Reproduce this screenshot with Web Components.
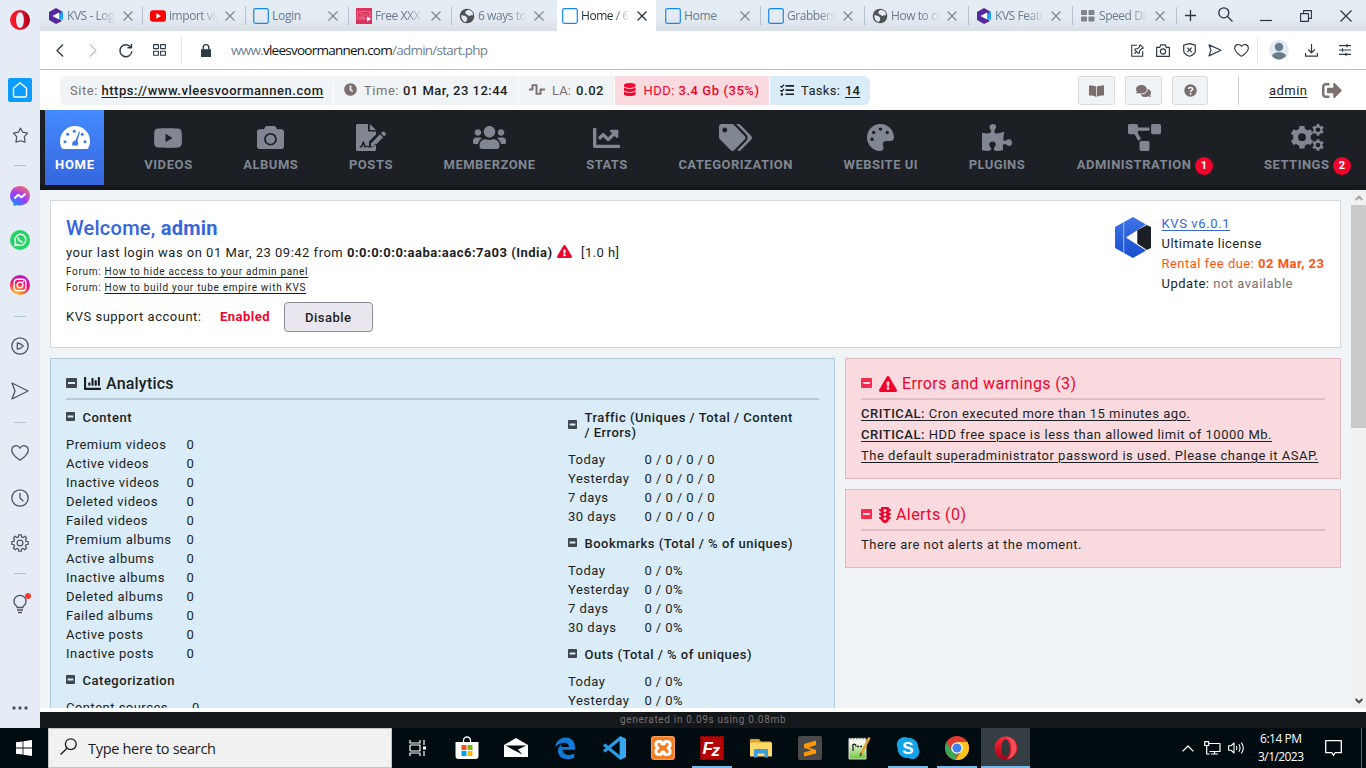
<!DOCTYPE html>
<html lang="en">
<head>
<meta charset="utf-8">
<title>Home / KVS</title>
<style>
html,body{margin:0;height:100%;overflow:hidden}
body{font-family:Roboto,"Liberation Sans",sans-serif;font-size:13px;color:#1c1f24}
</style>
</head>
<body>
<os-desktop></os-desktop>
<script>
const GEAR = (cx, cy, r, n, depth, hole) => {
  let d = '';
  for (let i = 0; i < n; i++) {
    const a = i * 2 * Math.PI / n, s = Math.PI / n;
    [[-.62, r - depth], [-.42, r], [.42, r], [.62, r - depth]].forEach(([k, q], j) => {
      const x = cx + q * Math.sin(a + k * s), y = cy - q * Math.cos(a + k * s);
      d += (i || j ? 'L' : 'M') + x.toFixed(2) + ' ' + y.toFixed(2);
    });
  }
  d += 'Z';
  if (hole) d += `M${cx - hole} ${cy}a${hole} ${hole} 0 1 0 ${2 * hole} 0a${hole} ${hole} 0 1 0 ${-2 * hole} 0Z`;
  return d;
};
const AXES = 'M496 384H64V80c0-8.84-7.16-16-16-16H16C7.16 64 0 71.16 0 80v336c0 17.67 14.33 32 32 32h464c8.84 0 16-7.16 16-16v-32c0-8.84-7.16-16-16-16z';
const P = d => `<path fill="currentColor" fill-rule="evenodd" d="${d}"/>`;
const S = (d, w = 1.3, extra = '') => `<path fill="none" stroke="currentColor" stroke-width="${w}" stroke-linejoin="round" ${extra} d="${d}"/>`;
const ICONS = {
  clock: ['0 0 512 512', P('M256,8C119,8,8,119,8,256S119,504,256,504,504,393,504,256,393,8,256,8Zm92.49,313h0l-20,25a16,16,0,0,1-22.49,2.5h0l-67-49.72a40,40,0,0,1-15-31.23V112a16,16,0,0,1,16-16h32a16,16,0,0,1,16,16V256l58,42.5A16,16,0,0,1,348.49,321Z')],
  wave: ['0 0 16 12', S('M0 6h3.5V1.2h4V10.8h4V6H16', 2)],
  database: ['0 0 448 512', P('M448 73.143v45.714C448 159.143 347.667 192 224 192S0 159.143 0 118.857V73.143C0 32.857 100.333 0 224 0s224 32.857 224 73.143zM448 176v102.857C448 319.143 347.667 352 224 352S0 319.143 0 278.857V176c48.125 33.143 136.208 48.572 224 48.572S399.874 209.143 448 176zm0 160v102.857C448 479.143 347.667 512 224 512S0 479.143 0 438.857V336c48.125 33.143 136.208 48.572 224 48.572S399.874 369.143 448 336z')],
  tasks: ['0 0 14 12', S('M.4 2l1.3 1.3L4 .7M.4 6.2l1.3 1.3L4 4.9', 1.2) + P('M5.5 1h8.5v1.7H5.5zM5.5 5.2h8.5v1.7H5.5zM5.5 9.4h8.5v1.7H5.5zM.8 9.2h2.2v2.2H.8z')],
  book: ['0 0 16 12', P('M0 1C0 .6.3.3.7.3 3 .4 6 .8 7.6 1.7V12C6 11 3 10.700.7 10.600.300 10.600 0 10.300 0 9.900ZM16 1c0-.4-.3-.7-.7-.7C13 .4 10 .8 8.400 1.700V12c1.600-1 4.600-1.300 6.900-1.400.4 0 .7-.3.7-.7Z')],
  comments: ['0 32 576 448', P('M416 192c0-88.400-93.100-160-208-160S0 103.600 0 192c0 34.300 14.100 65.900 38 92-13.400 30.200-35.500 54.200-35.800 54.500-2.200 2.300-2.800 5.700-1.500 8.700S4.800 352 8 352c36.600 0 66.900-12.300 88.700-25 32.200 15.700 70.300 25 111.300 25 114.900 0 208-71.600 208-160zm122 220c23.900-26 38-57.700 38-92 0-66.900-53.500-124.200-129.300-148.100.900 6.600 1.300 13.300 1.300 20.100 0 105.900-107.700 192-240 192-10.800 0-21.300-.800-31.700-1.900C207.800 439.600 281.800 480 368 480c41 0 79.100-9.200 111.300-25 21.800 12.700 52.100 25 88.700 25 3.200 0 6.100-1.900 7.300-4.800 1.300-2.900.700-6.300-1.500-8.700-.300-.300-22.400-24.200-35.800-54.500z')],
  question: ['0 0 14 14', '<circle cx="7" cy="7" r="6.700" fill="currentColor"/><path fill="none" stroke="#f0f4f7" stroke-width="1.700" d="M4.800 5.400C5 3.300 9.300 3.100 9.300 5.400 9.300 6.900 7.100 6.800 7.100 8.600"/><circle cx="7.100" cy="10.500" r="1.100" fill="#f0f4f7"/>'],
  signout: ['0 64 512 384', P('M497 273L329 441c-15 15-41 4.500-41-17v-96H152c-13.300 0-24-10.700-24-24v-96c0-13.300 10.700-24 24-24h136V88c0-21.400 25.900-32 41-17l168 168c9.300 9.400 9.300 24.600 0 34zM192 436v-40c0-6.600-5.400-12-12-12H96c-17.700 0-32-14.300-32-32V160c0-17.700 14.300-32 32-32h84c6.600 0 12-5.400 12-12V76c0-6.600-5.400-12-12-12H96c-53 0-96 43-96 96v192c0 53 43 96 96 96h84c6.600 0 12-5.400 12-12z')],
  gauge: ['0 0 30 23', '<path fill="currentColor" d="M15 0A15 15 0 0 0 0 15c0 2.800.700 5.400 2 7.500.3.300.8.500 1.300.5h23.400c.5 0 1-.2 1.300-.5 1.300-2.100 2-4.700 2-7.500A15 15 0 0 0 15 0Z"/><g fill="#3d78ef"><circle cx="7.700" cy="8.200" r="1.500"/><circle cx="14.300" cy="5.200" r="1.500"/><circle cx="22.300" cy="8.200" r="1.500"/><circle cx="5" cy="15.700" r="1.500"/><circle cx="25" cy="15.700" r="1.500"/><path d="M19 5.500l1 .3-2.600 9.500c1.200 1.200.900 2.800.3 4.200h-5.400c-.7-2.300.5-4.600 3.200-4.900z"/></g>'],
  video: ['0 0 28 20', P('M4 .5C8 0 20 0 24 .5c3 .3 3.600 2 3.800 5 .2 3 .2 6 0 9-.2 3-.8 4.700-3.800 5-4 .5-16 .5-20 0-3-.3-3.600-2-3.800-5-.2-3-.2-6 0-9C.400 2.500 1 .800 4 .500ZM11.500 5.800v8.400L18.500 10Z')],
  camera: ['0 32 512 448', P('M512 144v288c0 26.500-21.500 48-48 48H48c-26.500 0-48-21.500-48-48V144c0-26.500 21.500-48 48-48h88l12.300-32.900c7-18.700 24.900-31.100 44.900-31.100h125.500c20 0 37.900 12.400 44.900 31.100L376 96h88c26.500 0 48 21.500 48 48zM376 288c0-66.200-53.800-120-120-120s-120 53.800-120 120 53.800 120 120 120 120-53.800 120-120zm-32 0c0 48.500-39.500 88-88 88s-88-39.500-88-88 39.500-88 88-88 88 39.500 88 88z')],
  post: ['0 0 30 27', P('M1.600 0H12v6.200c0 .9.500 1.300 1.300 1.300H20v3L13 17.600V22l-1 .2c-.8 0-1-.8-1.500-.9-.6 0-.8.5-1.300.5l-1-3.800c-.3-1-1.400-.9-1.700 0L5 22H3.700v1.500H6l1.200-3 1.200 3h1.200l1-.7 1.500.8H16l4-4V25.400c0 .9-.6 1.600-1.600 1.600H1.600C.600 27 0 26.300 0 25.400V1.600C0 .600.600 0 1.600 0ZM13.800 0 20 6H13.800ZM15 19.400 24 10.300 27.100 13.400 18 22.500H15ZM25 9.300 26.400 7.900c.6-.6 1.300-.6 1.900 0l1.200 1.200c.6.600.6 1.300 0 1.900L28.100 12.400Z')],
  users: ['0 32 640 448', P('M96 224c35.300 0 64-28.700 64-64s-28.700-64-64-64-64 28.700-64 64 28.700 64 64 64zm448 0c35.300 0 64-28.700 64-64s-28.700-64-64-64-64 28.700-64 64 28.700 64 64 64zm32 32h-64c-17.600 0-33.500 7.100-45.100 18.600 40.300 22.100 68.900 62 75.100 109.400h66c17.700 0 32-14.300 32-32v-32c0-35.300-28.700-64-64-64zm-256 0c61.900 0 112-50.100 112-112S381.900 32 320 32 208 82.100 208 144s50.100 112 112 112zm76.800 32h-8.300c-20.800 10-43.900 16-68.500 16s-47.600-6-68.500-16h-8.300C179.600 288 128 339.600 128 403.200V432c0 26.500 21.500 48 48 48h288c26.500 0 48-21.500 48-48v-28.800c0-63.600-51.600-115.200-115.200-115.200zm-223.700-13.400C161.500 263.100 145.600 256 128 256H64c-35.300 0-64 28.700-64 64v32c0 17.700 14.300 32 32 32h65.900c6.300-47.400 34.900-87.300 75.200-109.400z')],
  chart: ['0 64 512 384', P(AXES + 'M464 96H345.940c-21.380 0-32.090 25.850-16.970 40.970l32.400 32.400L288 242.750l-73.370-73.370c-12.500-12.500-32.760-12.500-45.250 0l-68.690 68.690c-6.250 6.250-6.250 16.380 0 22.630l22.620 22.620c6.250 6.250 16.380 6.250 22.630 0L192 237.250l73.370 73.370c12.500 12.500 32.760 12.500 45.250 0l96-96 32.400 32.400c15.120 15.120 40.970 4.410 40.970-16.970V112c.01-8.840-7.150-16-15.990-16z')],
  bars: ['0 64 512 384', P(AXES + 'M333 320h38c7 0 13-6 13-13V173c0-7-6-13-13-13h-38c-7 0-13 6-13 13v134c0 7 6 13 13 13zM429 320h38c7 0 13-6 13-13V77c0-7-6-13-13-13h-38c-7 0-13 6-13 13v230c0 7 6 13 13 13zM141 320h38c7 0 13-6 13-13v-70c0-7-6-13-13-13h-38c-7 0-13 6-13 13v70c0 7 6 13 13 13zM237 320h38c7 0 13-6 13-13V109c0-7-6-13-13-13h-38c-7 0-13 6-13 13v198c0 7 6 13 13 13z')],
  tags: ['0 0 640 512', P('M497.941 225.941L286.059 14.059A48 48 0 0 0 252.118 0H48C21.490 0 0 21.490 0 48v204.118a48 48 0 0 0 14.059 33.941l211.882 211.882c18.744 18.745 49.136 18.746 67.882 0l204.118-204.118c18.745-18.745 18.745-49.137 0-67.882zM112 160c-26.510 0-48-21.490-48-48s21.490-48 48-48 48 21.490 48 48-21.490 48-48 48zm513.941 133.823L421.823 497.941c-18.745 18.745-49.137 18.745-67.882 0l-.360-.360L527.640 323.522c16.999-16.999 26.360-39.600 26.360-63.640s-9.362-46.641-26.360-63.640L331.397 0h48.721a48 48 0 0 1 33.941 14.059l211.882 211.882c18.745 18.745 18.745 49.137 0 67.882z')],
  palette: ['0 0 512 512', P('M204.300 5C104.900 24.400 24.800 104.300 5.200 203.400c-37 187 131.700 326.400 258.800 306.700 41.200-6.400 61.400-54.600 42.500-91.700-23.100-45.400 9.900-98.400 60.900-98.400h79.700c35.800 0 64.800-29.600 64.900-65.300C511.500 97.100 368.100-26.900 204.300 5zM96 320c-17.700 0-32-14.300-32-32s14.300-32 32-32 32 14.300 32 32-14.300 32-32 32zm32-128c-17.700 0-32-14.300-32-32s14.300-32 32-32 32 14.300 32 32-14.300 32-32 32zm128-64c-17.700 0-32-14.300-32-32s14.300-32 32-32 32 14.300 32 32-14.300 32-32 32zm128 64c-17.700 0-32-14.300-32-32s14.300-32 32-32 32 14.300 32 32-14.300 32-32 32z')],
  puzzle: ['0 0 576 512', P('M519.442 288.651c-41.519 0-59.500 31.593-82.058 31.593C377.409 320.244 432 144 432 144s-196.288 80-196.288-3.297c0-35.827 36.288-46.250 36.288-85.985C272 19.216 243.885 0 210.539 0c-34.654 0-66.366 18.891-66.366 56.346 0 41.364 31.711 59.277 31.711 81.750C175.885 207.719 0 166.758 0 166.758v333.237s178.635 41.047 178.635-28.662c0-22.473-40-40.107-40-81.471 0-37.456 29.250-56.346 63.577-56.346 33.673 0 61.788 19.216 61.788 54.717 0 39.735-36.288 50.158-36.288 85.985 0 60.803 129.675 25.730 181.230 25.730 0 0-34.725-120.101 25.827-120.101 35.962 0 46.423 36.152 86.308 36.152C556.712 416 576 387.990 576 354.443c0-34.199-18.962-65.792-56.558-65.792z')],
  diagram: ['0 0 640 512', P('M384 320H256c-17.670 0-32 14.330-32 32v128c0 17.670 14.330 32 32 32h128c17.670 0 32-14.330 32-32V352c0-17.670-14.330-32-32-32zM192 32c0-17.670-14.330-32-32-32H32C14.330 0 0 14.330 0 32v128c0 17.670 14.330 32 32 32h95.720l73.160 128.040C211.980 300.980 232.400 288 256 288h.280L192 175.510V128h224V64H192V32zM608 0H480c-17.670 0-32 14.330-32 32v128c0 17.670 14.330 32 32 32h128c17.670 0 32-14.330 32-32V32c0-17.670-14.330-32-32-32z')],
  cogs: ['0 0 33 27', P(GEAR(11, 13.200, 11.600, 6, 2.700, 3.900) + GEAR(27, 5.800, 6, 6, 1.500, 2.300) + GEAR(27, 21, 6, 6, 1.500, 2.300))],
  warning: ['0 0 576 512', P('M569.517 440.013C587.975 472.007 564.806 512 527.940 512H48.054c-36.937 0-59.999-40.055-41.577-71.987L246.423 23.985c18.467-32.009 64.720-31.951 83.154 0l239.940 416.028zM288 354c-25.405 0-46 20.595-46 46s20.595 46 46 46 46-20.595 46-46-20.595-46-46-46zm-43.673-165.346l7.418 136c.347 6.364 5.609 11.346 11.982 11.346h48.546c6.373 0 11.635-4.982 11.982-11.346l7.418-136c.375-6.874-5.098-12.654-11.982-12.654h-63.383c-6.884 0-12.356 5.780-11.981 12.654z')],
  traffic: ['0 0 384 512', P('M384 192h-64v-37.880c37.200-13.220 64-48.380 64-90.120h-64V32c0-17.670-14.330-32-32-32H96C78.330 0 64 14.330 64 32v32H0c0 41.740 26.800 76.900 64 90.120V192H0c0 41.740 26.800 76.900 64 90.120V320H0c0 42.840 28.250 78.690 66.990 91.050C79.420 468.720 130.600 512 192 512s112.580-43.280 125.010-100.950C355.750 398.690 384 362.840 384 320h-64v-37.880c37.200-13.220 64-48.380 64-90.120zM192 416c-26.510 0-48-21.490-48-48s21.490-48 48-48 48 21.490 48 48-21.490 48-48 48zm0-128c-26.510 0-48-21.490-48-48s21.490-48 48-48 48 21.490 48 48-21.490 48-48 48zm0-128c-26.510 0-48-21.490-48-48s21.490-48 48-48 48 21.490 48 48-21.490 48-48 48z')],
  minus: ['0 0 11 10', P('M1 0h9q1 0 1 1v8q0 1-1 1H1q-1 0-1-1V1q0-1 1-1ZM2 4v2h7V4Z')],

  opera: ['0 0 20 20', '<defs><linearGradient id="a" x1="0" y1="0" x2="1" y2="0"><stop offset="0" stop-color="#ff1b2d"/><stop offset=".55" stop-color="#e0112b"/><stop offset="1" stop-color="#a70014"/></linearGradient></defs><path fill="url(#a)" fill-rule="evenodd" d="M10 0a10 10 0 1 0 0 20a10 10 0 0 0 0-20ZM10 2.200c2.500 0 3.900 3.500 3.900 7.800s-1.400 7.800-3.900 7.800S6.100 14.300 6.100 10 7.500 2.200 10 2.200Z"/>'],
  operaTask: ['0 0 24 24', '<defs><linearGradient id="b" x1="0" y1="0" x2="0" y2="1"><stop offset="0" stop-color="#ff2b3d"/><stop offset="1" stop-color="#a70014"/></linearGradient></defs><circle cx="12" cy="12" r="11.500" fill="url(#b)"/><path fill="#f0505a" d="M12 .500c14 2 14 21 0 23 7-3 7-20 0-23Z"/><ellipse cx="11.500" cy="12" rx="4.200" ry="8.800" fill="#30383b"/>'],
  home: ['0 0 24 24', '<rect width="24" height="24" rx="2" fill="#0a9dff"/><path fill="none" stroke="#fff" stroke-width="1.400" stroke-linejoin="round" d="M12 4.800 5.500 10.200V17.500q0 1.500 1.500 1.500h10q1.500 0 1.500-1.500V10.200Z"/>'],
  star: ['0 0 18 18', S('M9 1.200l2.300 4.300 5.200.9-3.500 3.800.8 5.900L9 14.600l-4.800 1.500.8-5.900L1.500 6.400l5.200-.9Z')],
  messenger: ['0 0 20 20', '<defs><radialGradient id="m" cx=".2" cy="1" r="1.150"><stop offset="0" stop-color="#0a95ff"/><stop offset=".55" stop-color="#9b3dfb"/><stop offset="1" stop-color="#ff6d66"/></radialGradient></defs><path fill="url(#m)" d="M10 0a10 9.700 0 1 1-3.200 18.900L3.500 20V17A10 9.700 0 0 1 10 0Z"/><path fill="none" stroke="#fff" stroke-width="2" stroke-linejoin="round" d="M4.500 12.500 8.200 8.700l3.300 2.600 4-3.600"/>'],
  whatsapp: ['0 0 20 20', '<circle cx="10" cy="10" r="10" fill="#25d366"/><path fill="none" stroke="#fff" stroke-width="1.400" d="M4.800 15.400l.8-2.900a5.500 5.500 0 1 1 2.100 2.100Z"/><path fill="none" stroke="#fff" stroke-width="1.700" d="M8 7.300c0 2.300 2 4.600 4.700 4.800"/>'],
  instagram: ['0 0 20 20', '<defs><radialGradient id="i" cx=".3" cy="1" r="1.150"><stop offset="0" stop-color="#ffc738"/><stop offset=".3" stop-color="#ff7a2b"/><stop offset=".6" stop-color="#f70d72"/><stop offset="1" stop-color="#9a1df0"/></radialGradient></defs><circle cx="10" cy="10" r="10" fill="url(#i)"/><rect x="4.200" y="4.200" width="11.600" height="11.600" rx="3.200" fill="none" stroke="#fff" stroke-width="1.400"/><circle cx="10" cy="10" r="2.900" fill="none" stroke="#fff" stroke-width="1.400"/><circle cx="13.300" cy="6.700" r=".9" fill="#fff"/>'],
  play: ['0 0 18 18', '<circle cx="9" cy="9" r="8.200" fill="none" stroke="currentColor" stroke-width="1.300"/>' + S('M6.300 6v6q2.500.2 6-3-3.500-3.200-6-3Z')],
  send: ['0 0 18 18', S('M1 1 17 9 1 17 4 9Z')],
  heart: ['0 0 18 16', S('M9 15.200C3.500 11.500.8 8.500.8 5.200c0-5.300 6.200-5.800 8.200-2 2-3.800 8.200-3.300 8.200 2 0 3.300-2.700 6.300-8.200 10Z')],
  history: ['0 0 18 18', '<circle cx="9" cy="9" r="8.200" fill="none" stroke="currentColor" stroke-width="1.300"/>' + S('M9 4v5l3.300 3.300')],
  gear: ['0 0 18 18', S(GEAR(9, 9, 8.300, 8, 2, 0), 1.200) + '<circle cx="9" cy="9" r="2.900" fill="none" stroke="currentColor" stroke-width="1.200"/>'],
  bulb: ['0 0 20 22', S('M5 13.500A6 6 0 1 1 11 13.500V14.500H5ZM5 17h6M6 19.500h4', 1.300) + '<circle cx="16" cy="3" r="3" fill="#ff3b30"/>'],
  dots: ['0 0 16 4', '<g fill="currentColor"><circle cx="2" cy="2" r="1.700"/><circle cx="8" cy="2" r="1.700"/><circle cx="14" cy="2" r="1.700"/></g>'],

  kvs: ['0 0 16 16', '<path fill="#5429a0" d="M8 0 15 4 1 12V4ZM1 12V4L8 8l6 5-6 3Z"/><path fill="#16a3fb" d="M11 5.500 15 4v8l-4-1.500Z"/><path fill="#fff" d="M11 4.500v7L4.500 8Z"/>'],
  youtube: ['0 0 16 16', '<rect x="0" y="2.200" width="16" height="11.600" rx="3" fill="#f00"/><path fill="#fff" d="M6.300 5.300v5.400L11 8Z"/>'],
  blank: ['0 0 16 16', '<rect x=".7" y=".7" width="14.600" height="14.600" rx="1.500" fill="none" stroke="#1787f0" stroke-width="1.200"/>'],
  red: ['0 0 16 16', '<rect width="16" height="16" fill="#dd325e"/><path fill="none" stroke="#f3a0b8" stroke-width=".6" d="M1.500 3.500h12.500v7.500H1.500ZM3 5.500h3v3M8 8.500c0-3 3-3 4 0M3 9.300h6"/><path fill="#fff" d="M11 8.500v5l4-2.500Z"/>'],
  globe: ['0 0 16 16', '<circle cx="8" cy="8" r="7.300" fill="#505356"/><path fill="#e4ebf3" d="M10 2c-2 0-4.500 1.500-3.500 3.500.5 1 2.300 1 3 2 1 1.500 2-1 4.500 0 .3-2.500-1-5-4-5.500ZM2.200 7.500c1.500-.5 4 .5 5.300 1.500 1.300 1 .5 4.500-1 5-2.500-.5-4.300-3.500-4.300-6.500Z"/>'],
  dial: ['0 0 16 16', '<g fill="#808386"><rect x="1" y="2" width="6" height="5" rx=".8"/><rect x="8.500" y="2" width="6" height="5" rx=".8"/><rect x="1" y="8.500" width="6" height="5" rx=".8"/><rect x="8.500" y="8.500" width="6" height="5" rx=".8"/></g>'],
  close: ['0 0 10 10', S('M.5.5l9 9M9.500.5l-9 9', 1.200)],
  plus: ['0 0 11 11', S('M5.500 0v11M0 5.500h11', 1.300)],
  search: ['0 0 15 15', S('M9.500 9.500l5 5', 1.300) + '<circle cx="5.800" cy="5.800" r="5" fill="none" stroke="currentColor" stroke-width="1.300"/>'],
  min: ['0 0 12 12', S('M0 11.500h12', 1.200)],
  restore: ['0 0 12 12', S('M.6 3.600h7.800v7.800H.6ZM3.600 3.600v-3h7.800v7.800H8.400', 1.100)],
  winclose: ['0 0 12 12', S('M.5.5l11 11M11.500.5l-11 11', 1.200)],
  back: ['0 0 8 13', S('M7 .5 1 6.500l6 6', 1.400)],
  forward: ['0 0 8 13', S('M1 .5l6 6-6 6', 1.200)],
  reload: ['0 0 14 14', S('M12 4.500A6 6 0 1 0 12.900 8.200M12.500.8v4H8.500', 1.400)],
  grid: ['0 0 13 12', S('M.6.6h4.800v4H.6ZM7.600.6h4.800v4H7.600ZM.6 7.200h4.800v4H.6ZM7.600 7.200h4.800v4H7.600Z', 1.100)],
  lock: ['0 0 10 13', P('M0 5.200h10V13H0Z') + S('M2.200 5.500V3.400a2.800 2.800 0 0 1 5.600 0v2.100', 1.400)],
  pin: ['0 0 13 13', S('M6 1.300H.7v11h11V7M9.300.8l3 3-.9.9-.8-.1-2.100 2.300.1 1.800-.9.900-4-4 .9-.9 1.900.1 2.200-2.100-.2-1ZM5.600 7.500 3.400 9.800', 1.100)],
  shot: ['0 0 14 13', S('M.6 3.300h3.200l1-2.500h4.400l1 2.500h3.200v9H.6Z', 1.200) + '<circle cx="7" cy="7.500" r="2.600" fill="none" stroke="currentColor" stroke-width="1.200"/>'],
  shield: ['0 0 13 14', S('M6.500.7 12.300 2.200V7.500q0 4-5.800 5.800Q.7 11.500.7 7.500V2.200ZM4.300 4.700l4.400 4.400M8.700 4.700 4.300 9.100', 1.200)],
  send2: ['0 0 14 13', S('M1 .9 13 6.300 1 11.900 3 6.300Z', 1.200)],
  avatar: ['0 0 20 20', '<circle cx="10" cy="10" r="10" fill="#e1eaf2"/><g fill="#6b7c8d"><circle cx="10" cy="7" r="4.200"/><path d="M3 16c1-5 13-5 14 0-3.500 4.500-10.500 4.500-14 0Z"/></g>'],
  download: ['0 0 13 13', S('M6.500 0v8.500M3.200 5.500l3.300 3.300 3.300-3.300M.6 9v3.200h11.800V9', 1.200)],
  sliders: ['0 0 12 12', S('M0 1.600h12M0 6h12M0 10.400h12M8 0v3.300M3.500 4.300v3.400M7 8.700V12', 1.200)],
  up: ['0 0 8 6', S('M.7 5 4 1.500 7.300 5', 2)],
  down: ['0 0 8 6', S('M.7 1 4 4.500 7.300 1', 2)],
  brand: ['0 0 36 41', '<defs><linearGradient id="k" x1="0" y1="0" x2="0" y2="1"><stop offset="0" stop-color="#3e74e6"/><stop offset="1" stop-color="#1a4fd0"/></linearGradient></defs><path fill="url(#k)" d="M18 0 31 7.500 11 20.500 31 33.500 18 41 0 31V10Z"/><path fill="#1c1f24" d="M22.300 13.300 31.800 8 36 10V31l-4.200 2L22.300 26.500Z"/><path stroke="#a9c4f8" stroke-width=".9" d="M8.700 5v31"/>'],

  windows: ['0 0 16 16', P('M0 2.300 6.600 1.400V7.600H0ZM7.400 1.300 16 0V7.600H7.400ZM0 8.400H6.600V14.600L0 13.700ZM7.400 8.400H16V16L7.400 14.800Z')],
  tsearch: ['0 0 17 17', S('M7 10.200.6 16.500', 1.300) + '<circle cx="10.800" cy="6.200" r="5.400" fill="none" stroke="currentColor" stroke-width="1.300"/>'],
  taskview: ['0 0 24 24', S('M4 4v3h10V4M4 20v-3h10v3M4 9h10v6H4M4 9v6M18 4v5M18 15v5', 1.200) + '<rect x="17" y="10.500" width="3" height="3" fill="currentColor"/>'],
  store: ['0 0 24 24', '<path fill="none" stroke="#fff" stroke-width="1.300" d="M8.500 7V4.500a3.500 3.500 0 0 1 7 0V7"/><path fill="#fff" d="M.5 6h23v14q0 3-3 3h-17q-3 0-3-3Z"/><path fill="#f25022" d="M6.500 9h5v5h-5z"/><path fill="#7fba00" d="M12.500 9h5v5h-5z"/><path fill="#00a4ef" d="M6.500 15h5v5h-5z"/><path fill="#ffb900" d="M12.500 15h5v5h-5z"/>'],
  mail: ['0 0 24 24', '<path fill="#fff" d="M0 9 12 2l12 7v12H0Z"/><path fill="#000d11" d="M1.500 9.500H22.500L14 13.500l4.500 5L9.500 14Z"/>'],
  edge: ['0 0 24 24', '<path fill="#0f7ad8" d="M2.300 11C3 5 7.500 1.500 12.500 1.500c6.500 0 9.500 4.500 9.500 10v2.300H9.500c.2 3.700 3.300 5.200 6.500 5.200 2 0 3.700-.5 5.200-1.400v4.200c-1.700.9-3.900 1.400-6.200 1.400C9 23.200 5 20 5 15c0-3 1.500-5.700 4.500-7.300-.900.900-1.400 2.100-1.500 3.200h8c-.2-2.500-1.500-4.200-4.300-4.200-4 0-7.200 1.600-9.400 4.300Z"/>'],
  vscode: ['0 0 24 24', '<path fill="#1a7fc4" d="M17.500 0 24 3v18l-6.500 3Z"/><path fill="none" stroke="#2a9ae4" stroke-width="3.200" d="M18.500 2 2 15.500M18.500 22 2 8.500"/><path fill="#37a8f0" d="M18 0l6 3v18l-6 3Z"/>'],
  xampp: ['0 0 24 24', '<rect width="24" height="24" rx="3" fill="#f47c20"/><rect x=".7" y=".7" width="22.600" height="22.600" rx="2.500" fill="none" stroke="#f9a866" stroke-width="1"/><path fill="none" stroke="#fff" stroke-width="3" stroke-linejoin="round" d="M8 5.500h1.500q1 0 1 1.200t1 1.200h1q1 0 1-1.200t1-1.200H16q3 0 3 2.500v1.500q0 1-1 1.500t-1 1 1 1 1 1.500V16q0 2.500-3 2.500h-1.500q-1 0-1-1.200t-1-1.200h-1q-1 0-1 1.200t-1 1.200H8Q5 18.500 5 16v-1.500q0-1 1-1.500t1-1-1-1-1-1.500V8Q5 5.500 8 5.500Z"/>'],
  filezilla: ['0 0 24 24', '<rect width="24" height="24" fill="#b50404"/><rect x=".5" y=".5" width="23" height="23" fill="none" stroke="#5d0505" stroke-dasharray="2 1.500"/><text x="2.500" y="17.500" font-family="Liberation Sans,sans-serif" font-weight="bold" font-style="italic" font-size="17" fill="#fff">F<tspan dy="2.500" dx="-1.500">z</tspan></text>'],
  folder: ['0 0 24 24', '<path fill="#dca12a" d="M1 4q0-1 1-1h8l2 2.500H22V8H1Z"/><path fill="#ffd969" d="M1 6.500h22V20.500H1Z"/><path fill="#3e9be0" d="M5 21.500v-7.500q0-1 1-1h12q1 0 1 1v7.500h-3.500v-4h-7v4Z"/>'],
  sublime: ['0 0 24 24', '<rect width="24" height="24" rx="2" fill="#4a4a4a"/><path fill="#ff9800" d="M18 4.500v4.500L10.500 11.500 18 14v3.500L6 20.500V16.500l7.500-2.200L6 11.700V8Z"/>'],
  notepad: ['0 0 24 24', '<defs><linearGradient id="n" x1="0" y1="0" x2="0" y2="1"><stop offset=".2" stop-color="#f6f8f0"/><stop offset="1" stop-color="#6cc832"/></linearGradient></defs><path fill="url(#n)" stroke="#d9ddd4" d="M2 2.500h17V23H2Z"/><path fill="none" stroke="#77817a" stroke-width="1.500" stroke-dasharray="1.500 1.500" d="M3 2.500h16"/><path fill="none" stroke="#222" stroke-width="1.300" d="M6 15V8.500q3-1 3 2M10 10.500h2M13 10.500h2"/><path stroke="#e8a32c" stroke-width="2.600" d="M22.500 1.500 14 18"/><path stroke="#3b3b3b" stroke-width="1.500" d="M14.200 17l-.9 3"/>'],
  skype: ['0 0 24 24', '<path fill="#13a4e8" d="M7 1.200c2-.5 3.500 0 4.500.6C18 1.500 22.500 6 22.500 12.500 24 15 23.500 19 20.500 21.500c-2.500 2-5.500 1.800-8 .5C6 22.500 1.300 18 1.500 11.500-.5 7 2.500 2.200 7 1.200Z"/><text x="12" y="18" text-anchor="middle" font-family="Liberation Sans,sans-serif" font-weight="bold" font-size="17" fill="#fff">S</text>'],
  chrome: ['0 0 24 24', '<circle cx="12" cy="12" r="12" fill="#e33b2e"/><path fill="#3aa757" d="M1.600 6 7 15l5 3-1.500 5.900A12 12 0 0 1 1.600 6Z"/><path fill="#fcc31e" d="M22.400 6A12 12 0 0 1 10.500 23.900L16.500 14.500 12 6Z"/><circle cx="12" cy="12" r="5.800" fill="#fff"/><circle cx="12" cy="12" r="4.600" fill="#3f82ee"/>'],
  chevron: ['0 0 12 7', S('M.6 6.400 6 1l5.400 5.400', 1.300)],
  network: ['0 0 17 14', S('M4.500 2.500H16v8H5.500M10.500 10.500V13M7 13h7M.7.7h4v3.800h-4ZM2.700 4.500V13h3', 1.200)],
  sound: ['0 0 17 14', S('M.6 4.800H3L6 2v10L3 9.200H.6ZM8.300 5q1.300 2 0 4M10.800 3.300q2.500 3.700 0 7.400M13.300 1.600q4 5.400 0 10.800', 1.100)],
  notice: ['0 0 17 17', S('M.7.7h15.600v12H10L8.500 15.500 7 12.700H.7Z', 1.300)]
};

const define = (name, markup, setup) => customElements.define(name, class extends HTMLElement {
  connectedCallback() {
    if (this.shadowRoot) return;
    const root = this.attachShadow({ mode: 'open' });
    root.innerHTML = typeof markup === 'function' ? markup(this) : markup;
    if (setup) setup(this, root);
  }
});
const ic = (name, w, h, style = '') => `<ui-icon name="${name}" w="${w}" h="${h}" style="${style}"></ui-icon>`;

define('os-desktop', `<style>
:host{display:grid;grid-template-rows:728px 40px;width:1366px;height:768px;overflow:hidden}
.win{display:grid;grid-template-columns:40px 1fr;min-height:0}
.main{display:grid;grid-template-rows:31px 39px 1fr;min-height:0;min-width:0}
</style><div class="win"><side-bar></side-bar><div class="main"><tab-strip></tab-strip><address-bar></address-bar><admin-page></admin-page></div></div><task-bar></task-bar>`);

define('side-bar', () => {
  const items = [['opera', 20, 20, 40], ['home', 24, 24, 24, 38], ['star', 17, 17, 44, 11], 0, ['messenger', 20, 20, 45], ['whatsapp', 20, 20, 44], ['instagram', 20, 20, 46], 0,
    ['play', 18, 18, 44], ['send', 18, 18, 46], 0, ['heart', 18, 16, 45], ['history', 18, 18, 45], ['gear', 18, 18, 45], 0, ['bulb', 20, 22, 46]];
  return `<style>
:host{display:flex;flex-direction:column;align-items:center;background:#e5ecf5;color:#4c5666}
div{display:flex;align-items:center;justify-content:center;flex:none}
i{flex:none;width:12px;height:1px;background:#b3c3d2;margin:8px 0 7px}
.more{margin-top:auto;height:20px;margin-bottom:10px}
</style>` + items.map(t => t ? `<div style="height:${t[3]}px;margin-top:${t[4] || 0}px">${ic(t[0], t[1], t[2], t[0] === 'bulb' ? 'margin-left:4px' : '')}</div>` : '<i></i>').join('') + `<div class="more">${ic('dots', 16, 4)}</div>`;
});

define('browser-tab', el => `<style>
:host{display:flex;box-sizing:border-box;height:31px;border-left:1px solid transparent;color:#6b7c8e}
.in{flex:1;display:flex;align-items:center;padding-left:7px;min-width:0}
:host([sep]){border-image:linear-gradient(transparent 7px,#b5c4d1 7px,#b5c4d1 24px,transparent 24px) 1}
:host([active]) .in{background:#fff;margin:0 1px 0 2px;padding-left:5px;color:#1d2a36}
.t{width:49px;margin-left:3px;overflow:hidden;white-space:nowrap;font:12px "Open Sans","Noto Sans",sans-serif;letter-spacing:-.45px;-webkit-mask:linear-gradient(90deg,#000 65%,transparent)}
:host([full]) .t{-webkit-mask:none;letter-spacing:-.3px}
ui-icon.x{margin-left:7px;color:#7b8791}
:host([active]) .x{color:#222c36}
</style><div class="in">${ic(el.getAttribute('icon'), 16, 16)}<span class="t"><slot></slot></span><ui-icon class="x" name="close" w="10" h="10"></ui-icon></div>`);

define('tab-strip', () => {
  const tabs = [['kvs', 'KVS - Log', 102], ['youtube', 'import vid', 103, 1], ['blank', 'Login', 103, 1, 1], ['red', 'Free XXX', 103, 1], ['globe', '6 ways to', 103, 1], ['blank', 'Home / 6', 103], ['blank', 'Home', 103, 0, 1], ['blank', 'Grabbers', 104, 1], ['globe', 'How to cr', 104, 1], ['kvs', 'KVS Featu', 104, 1], ['dial', 'Speed Dia', 104, 1]];
  return `<style>
:host{display:flex;background:linear-gradient(#e5edf5 0,#e3eaf2 60%,#d9dfe7 100%);color:#2b3540}
.b{display:flex;align-items:center;justify-content:center;flex:none}
</style>` + tabs.map((t, i) => `<browser-tab icon="${t[0]}" style="width:${t[2]}px"${t[3] ? ' sep' : ''}${t[4] ? ' full' : ''}${i === 5 ? ' active' : ''}>${t[1]}</browser-tab>`).join('') +
  `<div class="b" style="width:27px;border-left:1px solid #b5c4d1;height:17px;margin-top:7px">${ic('plus', 11, 11)}</div>
<div class="b" style="width:43px">${ic('search', 15, 15, 'margin-bottom:2px')}</div><div class="b" style="width:38px">${ic('min', 12, 12, 'margin-bottom:2px')}</div><div class="b" style="width:41px">${ic('restore', 12, 12)}</div><div class="b" style="width:39px">${ic('winclose', 12, 12)}</div>`;
});

define('address-bar', () => {
  const cell = (n, w, h, box, st = '') => `<div class="c" style="width:${box}px;${st}">${ic(n, w, h)}</div>`;
  return `<style>
:host{display:flex;align-items:center;box-sizing:border-box;height:39px;background:#fff;border-bottom:1px solid #b4bfca;color:#2e3a45;padding:0 6px 0 3px}
.c{display:flex;align-items:center;justify-content:center;flex:none}
.v{width:1px;height:28px;background:#e2e6ea;flex:none}
.url{margin-left:5px;font:13.500px "Open Sans","Noto Sans",sans-serif;color:#71808f}
.url b{font-weight:400;color:#111}
</style>${cell('back', 8, 13, 33)}${cell('forward', 8, 13, 34, 'color:#b9c0c8')}${cell('reload', 14, 14, 32)}${cell('grid', 13, 12, 34)}<span class="v" style="margin:0 4px 0 5px"></span>${cell('lock', 10, 13, 40)}
<div class="url"><fit-text w="257">www.<b>vleesvoormannen.com</b>/admin/start.php</fit-text></div>
<span style="flex:1"></span>${cell('pin', 13, 13, 26)}${cell('shot', 14, 13, 26)}${cell('shield', 13, 14, 26)}${cell('send2', 14, 13, 26)}${cell('heart', 15, 13, 26)}<span class="v" style="margin:0 6px 0 3px"></span>${cell('avatar', 20, 20, 30)}${cell('download', 13, 13, 35)}${cell('sliders', 12, 12, 31)}`;
});

define('admin-page', `<style>
:host{display:grid;grid-template-rows:40px 80px 518px 4px 16px;min-height:0;min-width:0;background:#fff}
footer{background:#15181b;color:#7b7170;font-size:10px;line-height:16px;padding-left:580px}
</style><info-bar></info-bar><main-nav></main-nav><dash-board></dash-board><span></span><footer><fit-text w="165.500">generated in 0.09s using 0.08mb</fit-text></footer>`);

define('info-bar', `<style>
:host{display:flex;align-items:flex-start;padding:6px 0 0 20px;color:#7b706e;line-height:29px}
.p{display:flex;align-items:center;box-sizing:border-box;height:29px;background:#f0f4f7;padding-left:10px;margin-right:1px;white-space:nowrap}
.p b,.adm{font-weight:500;color:#1c1f24}
u{text-underline-offset:2px}
.p b{margin-left:4px}
.btn{display:flex;align-items:center;justify-content:center;box-sizing:border-box;width:37px;height:29px;background:#f0f4f7;border:1px solid #d9dcde;border-radius:3px;margin-right:10px}
</style>
<div class="p" style="width:273px;border-radius:6px 0 0 6px"><fit-text w="27.500">Site:</fit-text><b><u><fit-text w="221.500">https://www.vleesvoormannen.com</fit-text></u></b></div>
<div class="p" style="width:184px">${ic('clock', 13, 13, 'margin:0 7px 2px 0')}<fit-text w="34.500">Time:</fit-text><b style="margin-left:4.500px"><fit-text w="104.500">01 Mar, 23 12:44</fit-text></b></div>
<div class="p" style="width:95px">${ic('wave', 16, 11, 'margin:0 7px 2px 0')}<fit-text w="19">LA:</fit-text><b style="margin-left:5px"><fit-text w="27.500">0.02</fit-text></b></div>
<div class="p" style="width:154px;background:#f9dbdf;color:#f3022d">${ic('database', 11.500, 13, 'margin:0 8px 2px -1px')}<fit-text w="31">HDD:</fit-text><b style="color:inherit"><fit-text w="80.500">3.4 Gb (35%)</fit-text></b></div>
<div class="p" style="width:100px;background:#d9ecf8;color:#1c1f24;border-radius:0 6px 6px 0">${ic('tasks', 14, 12, 'margin:0 7px 2px 0')}<fit-text w="39">Tasks:</fit-text><b style="margin-left:5px"><u><fit-text w="15">14</fit-text></u></b></div>
<span style="flex:1"></span>
<div class="btn">${ic('book', 15, 12)}</div><div class="btn">${ic('comments', 15, 12)}</div><div class="btn" style="width:36px;margin-right:30px">${ic('question', 13, 13)}</div>
<span style="width:1px;height:29px;background:#cfd3d6;margin-right:30px"></span><u class="adm" style="font-weight:400"><fit-text w="38">admin</fit-text></u><span style="display:flex;align-items:center;height:29px;margin:0 24px 0 15px">${ic('signout', 20, 15)}</span>`);

define('main-nav', () => {
  const items = [['gauge', 30, 23, 'HOME', 39], ['video', 28, 20, 'VIDEOS', 48], ['camera', 27, 23, 'ALBUMS', 54.500], ['post', 30, 27, 'POSTS', 43.500], ['users', 33, 23, 'MEMBERZONE', 91.500], ['chart', 27, 20, 'STATS', 41], ['tags', 33, 27, 'CATEGORIZATION', 114], ['palette', 27, 27, 'WEBSITE UI', 74], ['puzzle', 30, 27, 'PLUGINS', 56], ['diagram', 33, 27, 'ADMINISTRATION', 114, 1], ['cogs', 33, 27, 'SETTINGS', 65, 2]];
  return `<style>
:host{display:flex;justify-content:space-between;align-items:flex-start;box-sizing:border-box;height:80px;background:#1c1f24;border-bottom:5px solid #14181b;padding:0 5px;color:#808793}
nav-item:first-of-type{margin-right:-1px}
nav-item:nth-of-type(10){margin-left:1px}
</style>` + items.map((t, i) => `<nav-item icon="${t[0]}" iw="${t[1]}" ih="${t[2]}" tw="${t[4]}"${t[5] ? ` count="${t[5]}"` : ''}${i ? '' : ' active'}>${t[3]}</nav-item>`).join('');
});
define('nav-item', el => `<style>
:host{display:flex;flex-direction:column;align-items:center;box-sizing:border-box;height:75px;padding:14px 10px 0}
:host([active]){background:linear-gradient(#458aff,#3566dd);color:#fff}
.i{height:27px;display:flex;align-items:center}
.l{display:flex;align-items:center;height:20px;margin-top:4px;font-weight:700;line-height:20px;white-space:nowrap}
.n{box-sizing:border-box;width:18px;height:18px;border-radius:50%;background:#f0032d;color:#fff;font-size:11px;line-height:18px;text-align:center;margin:2px 0 0 4px;letter-spacing:0}
</style><div class="i">${ic(el.getAttribute('icon'), el.getAttribute('iw'), el.getAttribute('ih'))}</div><div class="l"><fit-text w="${el.getAttribute('tw')}">${el.textContent}</fit-text>${el.hasAttribute('count') ? `<span class="n">${el.getAttribute('count')}</span>` : ''}</div>`);

define('dash-board', () => {
  const days = v => [['Today', v, 37], ['Yesterday', v, 61], ['7 days', v, 40], ['30 days', v, 48]];
  const left = [['Premium videos', 0, 100], ['Active videos', 0, 82.500], ['Inactive videos', 0, 93], ['Deleted videos', 0, 91.500], ['Failed videos', 0, 81.500], ['Premium albums', 0, 105], ['Active albums', 0, 88], ['Inactive albums', 0, 98.500], ['Deleted albums', 0, 97], ['Failed albums', 0, 87], ['Active posts', 0, 77], ['Inactive posts', 0, 87.500]];
  const grp = (title, tw, rows, lw, vw) => `<stat-group rows='${JSON.stringify(rows)}' lw="${lw}" vw="${vw}">${title.map((t, i) => `<div><fit-text w="${tw[i]}">${t}</fit-text></div>`).join('')}</stat-group>`;
  return `<style>
:host{display:grid;grid-template-columns:1fr 15px;height:518px;background:#f0f4f7;overflow:hidden}
.body{padding:10px 10px 0;overflow:hidden;height:508px;min-width:0}
.cols{display:grid;grid-template-columns:785px 496px;gap:10px;margin-top:10px;align-items:start}
.side{display:grid;gap:10px}
.split{display:grid;grid-template-columns:502px 1fr}
.row{height:21px;line-height:21px;color:#1c1f24}
.row b{font-weight:500}
.list{padding:3px 0 0;margin-bottom:-3px}
u{text-underline-offset:1.500px}
.sb{background:#f1f1f1;display:flex;flex-direction:column;align-items:center;justify-content:space-between;color:#a9a9a9}
.sb span{height:15px;display:flex;align-items:center}
.thumb{width:15px;height:223px;background:#cacaca;margin-bottom:auto}
</style><div class="body"><welcome-card></welcome-card><div class="cols">
<dash-panel icon="bars" iw="17" ih="13" tw="67.500" title-text="Analytics" style="height:460px"><div class="split"><div>${grp(['Content'], [49], left, 120.500, 8)}${grp(['Categorization'], [92], [['Content sources', 0, 101.500]], 126, 8)}</div>
<div>${grp(['Traffic (Uniques / Total / Content', '/ Errors)'], [207, 51.500], days('0 / 0 / 0 / 0'), 76.500, 70)}${grp(['Bookmarks (Total / % of uniques)'], [208], days('0 / 0%'), 76.500, 38)}${grp(['Outs (Total / % of uniques)'], [167], days('0 / 0%').slice(0, 2), 76.500, 38)}</div></div></dash-panel>
<div class="side"><dash-panel tone="red" icon="warning" iw="18" ih="16" tw="174" title-text="Errors and warnings (3)"><div class="list">
<div class="row"><u><fit-text w="329"><b>CRITICAL:</b> Cron executed more than 15 minutes ago.</fit-text></u></div><div class="row"><u><fit-text w="410.500"><b>CRITICAL:</b> HDD free space is less than allowed limit of 10000 Mb.</fit-text></u></div><div class="row"><u><fit-text w="457">The default superadministrator password is used. Please change it ASAP.</fit-text></u></div></div></dash-panel>
<dash-panel tone="red" icon="traffic" iw="12" ih="16" tw="70" title-text="Alerts (0)"><div class="list"><div class="row"><fit-text w="220.500">There are not alerts at the moment.</fit-text></div></div></dash-panel></div>
</div></div><div class="sb"><span>${ic('up', 8, 6)}</span><div class="thumb"></div><span style="color:#505050">${ic('down', 8, 6)}</span></div>`;
});

define('welcome-card', `<style>
:host{display:flex;justify-content:space-between;box-sizing:border-box;height:148px;background:#fff;border:1px solid #d5d9dc;padding:15px 15px 0}
h1{margin:0;font-size:20px;line-height:24px;font-weight:500;color:#3566dd}
.l{height:23px;padding-top:1px;line-height:24px;white-space:nowrap}
.f{font-size:10px;line-height:16px}
b{font-weight:700}
u{text-underline-offset:1.500px}
.s{display:flex;align-items:center;height:30px;margin-top:6px}
.s>fit-text,.en{margin-bottom:1px}
.en{color:#f3022d;font-weight:700;margin-right:14px;margin-left:19px}
button{box-sizing:border-box;width:89px;height:30px;margin:0;padding:0;font:500 13px Roboto,sans-serif;border:1px solid #8f8b9b;border-radius:4px;background:#e9e7ed;color:#1c1f24}
.r{display:flex;gap:11px;line-height:20px;margin-top:-2px}
</style><div><h1><fit-text w="151.500">Welcome, <b>admin</b></fit-text></h1>
<div class="l"><fit-text w="486">your last login was on 01 Mar, 23 09:42 from <b>0:0:0:0:0:aaba:aac6:7a03 (India)</b></fit-text>${ic('warning', 15, 13, 'display:inline-block;vertical-align:-1px;color:#f3022d;margin:0 9px 0 5px')}<fit-text w="38">[1.0 h]</fit-text></div>
<div class="f"><fit-text w="241.500">Forum: <u>How to hide access to your admin panel</u></fit-text></div><div class="f"><fit-text w="239.500">Forum: <u>How to build your tube empire with KVS</u></fit-text></div>
<div class="s"><fit-text w="135">KVS support account:</fit-text><span class="en"><fit-text w="49.500">Enabled</fit-text></span><button><fit-text w="46">Disable</fit-text></button></div></div>
<div class="r">${ic('brand', 36, 41, 'margin-top:3px')}<div style="margin-left:-1px;margin-right:1px"><div style="color:#3566dd"><u><fit-text w="68">KVS v6.0.1</fit-text></u></div><div><fit-text w="100">Ultimate license</fit-text></div><div style="color:#ff5412"><fit-text w="162.500">Rental fee due: <b>02 Mar, 23</b></fit-text></div><div><fit-text w="131">Update: <span style="color:#7b706e">not available</span></fit-text></div></div></div>`);

define('dash-panel', el => `<style>
:host{display:block;box-sizing:border-box;background:#d9ecf7;border:1px solid #b1cbda;padding:15px 15px 15px;--rule:#b7ccd8}
:host([tone=red]){background:#f9dbdf;border-color:#e0b8c0;--rule:#dfbdc4}
.h{display:flex;align-items:center;height:20px;padding-bottom:4px;border-bottom:2px solid var(--rule);font-size:16px;line-height:20px;font-weight:500;color:#1c1f24;white-space:nowrap}
:host([tone=red]) .h{color:#f3022d;font-weight:400}
</style><div class="h">${ic('minus', 11, 10, 'opacity:.8;margin:0 7px 2px 0')}${ic(el.getAttribute('icon'), el.getAttribute('iw'), el.getAttribute('ih'), 'margin:0 5px 1px 0')}<fit-text w="${el.getAttribute('tw')}">${el.getAttribute('title-text')}</fit-text></div><slot></slot>`);

define('stat-group', el => `<style>
:host{display:block;margin-top:10px}
.h{display:flex;align-items:center;line-height:15px;font-weight:500;margin-bottom:10px;white-space:nowrap}
.r{display:flex;height:19px;line-height:19px}
.k{width:${el.getAttribute('lw')}px;flex:none}
</style><div class="h">${ic('minus', 9, 9, 'opacity:.8;margin:0 7.500px 2px 0')}<div><slot></slot></div></div>` +
  JSON.parse(el.getAttribute('rows')).map(r => `<div class="r"><span class="k"><fit-text w="${r[2]}">${r[0]}</fit-text></span><fit-text w="${el.getAttribute('vw')}">${r[1]}</fit-text></div>`).join(''));

define('task-bar', () => {
  const apps = [['taskview'], ['store'], ['mail'], ['edge'], ['vscode'], ['xampp'], ['filezilla', 1], ['folder'], ['sublime'], ['notepad'], ['skype', 1], ['chrome', 1], ['operaTask', 2]];
  return `<style>
:host{display:flex;background:#000c10;color:#fff;font-family:"Open Sans","Noto Sans",sans-serif}
.start{width:48px;display:flex;align-items:center;justify-content:center}
.q{display:flex;align-items:center;box-sizing:border-box;width:344px;height:40px;background:#f1f1f1;border:1px solid #c3c5c6;color:#1c1c1c;padding-left:11px;font-size:14.500px}
.apps{display:flex;margin-left:1px}
.a{display:flex;align-items:center;justify-content:center;width:49px;position:relative;flex:none}
.a[data-s="1"]::after,.a[data-s="2"]::after{content:"";position:absolute;left:4.500px;right:4.500px;bottom:0;height:2px;background:#76b9ed}
.a[data-s="2"]{background:#353e42}.a[data-s="2"]::after{left:0;right:0}
.tray{display:flex;align-items:center;margin-left:auto}
.time{width:48px;text-align:center;font-size:12px;line-height:18px;margin:0 20px 0 12px}
</style><div class="start">${ic('windows', 16, 16)}</div><div class="q">${ic('tsearch', 17, 17, 'margin:0 11px 3px 0')}<fit-text w="128">Type here to search</fit-text></div><div class="apps">` +
  apps.map(a => `<div class="a" data-s="${a[1] || 0}">${ic(a[0], 24, 24)}</div>`).join('') +
  `</div><div class="tray">${ic('chevron', 12, 7)}${ic('network', 17, 14, 'margin-left:10px')}${ic('sound', 17, 14, 'margin-left:7px')}<div class="time"><div><fit-text w="42">6:14 PM</fit-text></div><div><fit-text w="46">3/1/2023</fit-text></div></div>${ic('notice', 17, 17)}<span style="width:1px;height:40px;background:#5d6568;margin:0 4px 0 19px"></span></div>`;
});

define('ui-icon', el => {
  const [box, body] = ICONS[el.getAttribute('name')], w = +el.getAttribute('w'), h = +el.getAttribute('h');
  return `<style>:host{display:block;flex:none;width:${w}px;height:${h}px}svg{display:block;overflow:visible}</style><svg width="${w}" height="${h}" viewBox="${box}" preserveAspectRatio="none" aria-hidden="true">${body}</svg>`;
});

/* Tracks its text so that the run spans the given width. */
define('fit-text', '<style>:host{display:inline-block;white-space:pre;letter-spacing:0;text-decoration:inherit;text-underline-offset:inherit}</style><slot></slot>', el => {
  const w = +el.getAttribute('w'), n = el.textContent.length;
  const gap = (w - el.getBoundingClientRect().width) / Math.max(1, n - 1);
  el.style.letterSpacing = gap.toFixed(3) + 'px';
  el.style.marginRight = (-gap).toFixed(3) + 'px';
});
</script>
</body>
</html>
